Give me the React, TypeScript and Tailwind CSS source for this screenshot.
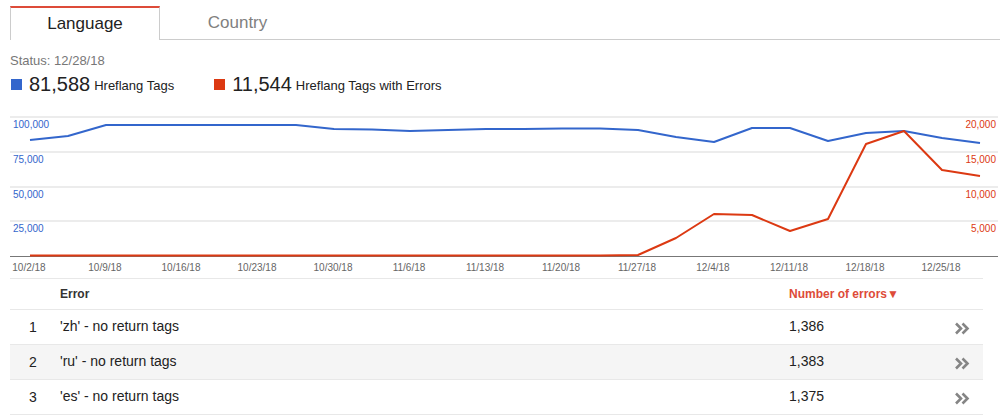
import React from "react";

const BLUE = "#3366cc";
const RED = "#dc3912";

const blue = [139, 135, 124, 124, 124, 124, 124, 124, 128, 128.5, 130, 129, 128, 128, 127.5, 127.5, 129, 136, 141, 127, 127, 140, 132, 130, 137, 142];
const red = [254.5, 254.5, 254.5, 254.5, 254.5, 254.5, 254.5, 254.5, 254.5, 254.5, 254.5, 254.5, 254.5, 254.5, 254.5, 254.5, 254, 237, 213, 214, 230, 218, 143, 130, 169, 175];

const toPoints = (ys: number[]) => ys.map((y, i) => `${30 + 38 * i},${y}`).join(" ");

const gridY = [116, 151, 186, 220];
const leftLabels = ["100,000", "75,000", "50,000", "25,000"];
const rightLabels = ["20,000", "15,000", "10,000", "5,000"];
const dates = ["10/2/18", "10/9/18", "10/16/18", "10/23/18", "10/30/18", "11/6/18", "11/13/18", "11/20/18", "11/27/18", "12/4/18", "12/11/18", "12/18/18", "12/25/18"];

const rows = [
  { n: 1, err: "'zh' - no return tags", count: "1,386" },
  { n: 2, err: "'ru' - no return tags", count: "1,383" },
  { n: 3, err: "'es' - no return tags", count: "1,375" },
];

function Chart() {
  return (
    <svg width={1008} height={177} viewBox="0 100 1008 177" className="block" style={{ fontFamily: "'Liberation Sans', Arial, sans-serif" }}>
      {gridY.map((y) => (
        <line key={y} x1={10} x2={998} y1={y} y2={y} stroke="#d9d9d9" strokeWidth={1} />
      ))}
      <line x1={10} x2={998} y1={255.5} y2={255.5} stroke="#777" strokeWidth={1} />
      {gridY.map((y, i) => (
        <text key={"l" + y} x={13} y={y + 11} fontSize={10} fill={BLUE}>
          {leftLabels[i]}
        </text>
      ))}
      {gridY.map((y, i) => (
        <text key={"r" + y} x={996} y={y + 11} fontSize={10} fill={RED} textAnchor="end">
          {rightLabels[i]}
        </text>
      ))}
      <polyline points={toPoints(blue)} fill="none" stroke={BLUE} strokeWidth={2} strokeLinejoin="round" />
      <polyline points={toPoints(red)} fill="none" stroke={RED} strokeWidth={2} strokeLinejoin="round" />
      {dates.map((d, i) => (
        <text key={d} x={29 + 76 * i} y={270} fontSize={10} fill="#666" textAnchor="middle">
          {d}
        </text>
      ))}
    </svg>
  );
}

function Chevrons() {
  return (
    <svg width={16} height={13} viewBox="0 0 16 13">
      <path d="M2 1.5l5 5-5 5M8.5 1.5l5 5-5 5" fill="none" stroke="#858585" strokeWidth={2.6} />
    </svg>
  );
}

export default function App() {
  return (
    <div className="w-[1008px] h-[418px] bg-white overflow-hidden text-[#222]" style={{ fontFamily: "'Liberation Sans', Arial, sans-serif" }}>
      <div className="flex pt-[6px] pl-[10px] pr-[8px]">
        <div className="w-[150px] h-[34px] border-t-2 border-t-[#dd4b39] border-x border-x-[#ccc] flex items-center justify-center text-[17px] text-[#222]">
          Language
        </div>
        <div className="w-[155px] h-[34px] border-b border-b-[#ccc] flex items-center justify-center text-[17px] text-[#808080]">
          Country
        </div>
        <div className="flex-1 border-b border-b-[#ccc]" />
      </div>

      <div className="pl-[10px] mt-[13px] text-[13px] leading-[16px] text-[#777]">Status: 12/28/18</div>

      <div className="flex items-end pl-[11px] mt-[4px] h-[22px]">
        <div className="flex items-end">
          <span className="w-[11px] h-[11px] bg-[#3366cc] mb-[5px] mr-[7px]" />
          <span className="text-[20px] leading-[22px] mr-[4px]">81,588</span>
          <span className="text-[13px] leading-[18px]">Hreflang Tags</span>
        </div>
        <div className="flex items-end ml-[40px]">
          <span className="w-[11px] h-[11px] bg-[#dc3912] mb-[5px] mr-[7px]" />
          <span className="text-[20px] leading-[22px] mr-[4px]">11,544</span>
          <span className="text-[13px] leading-[18px]">Hreflang Tags with Errors</span>
        </div>
      </div>

      <div className="mt-[6px]">
        <Chart />
      </div>

      <div className="ml-[10px] w-[973px] border-t border-t-[#e8e8e8]">
        <div className="flex items-center h-[31px] border-b border-b-[#e8e8e8] text-[12px] font-bold">
          <div className="w-[50px]" />
          <div className="w-[729px] text-[#333]">Error</div>
          <div className="text-[#dd4b39] flex items-center">
            Number of errors<span className="text-[12px]">▼</span>
          </div>
        </div>
        {rows.map((r) => (
          <div key={r.n} className={`flex items-center h-[35px] pb-[2px] border-b border-b-[#e8e8e8] text-[14px] ${r.n === 2 ? "bg-[#f5f5f5]" : "bg-white"}`}>
            <div className="w-[50px] pr-[4px] pt-[2px] text-center">{r.n}</div>
            <div className="w-[729px]">{r.err}</div>
            <div className="w-[165px]">{r.count}</div>
            <div className="pt-[4px]">
              <Chevrons />
            </div>
          </div>
        ))}
      </div>
    </div>
  );
}
